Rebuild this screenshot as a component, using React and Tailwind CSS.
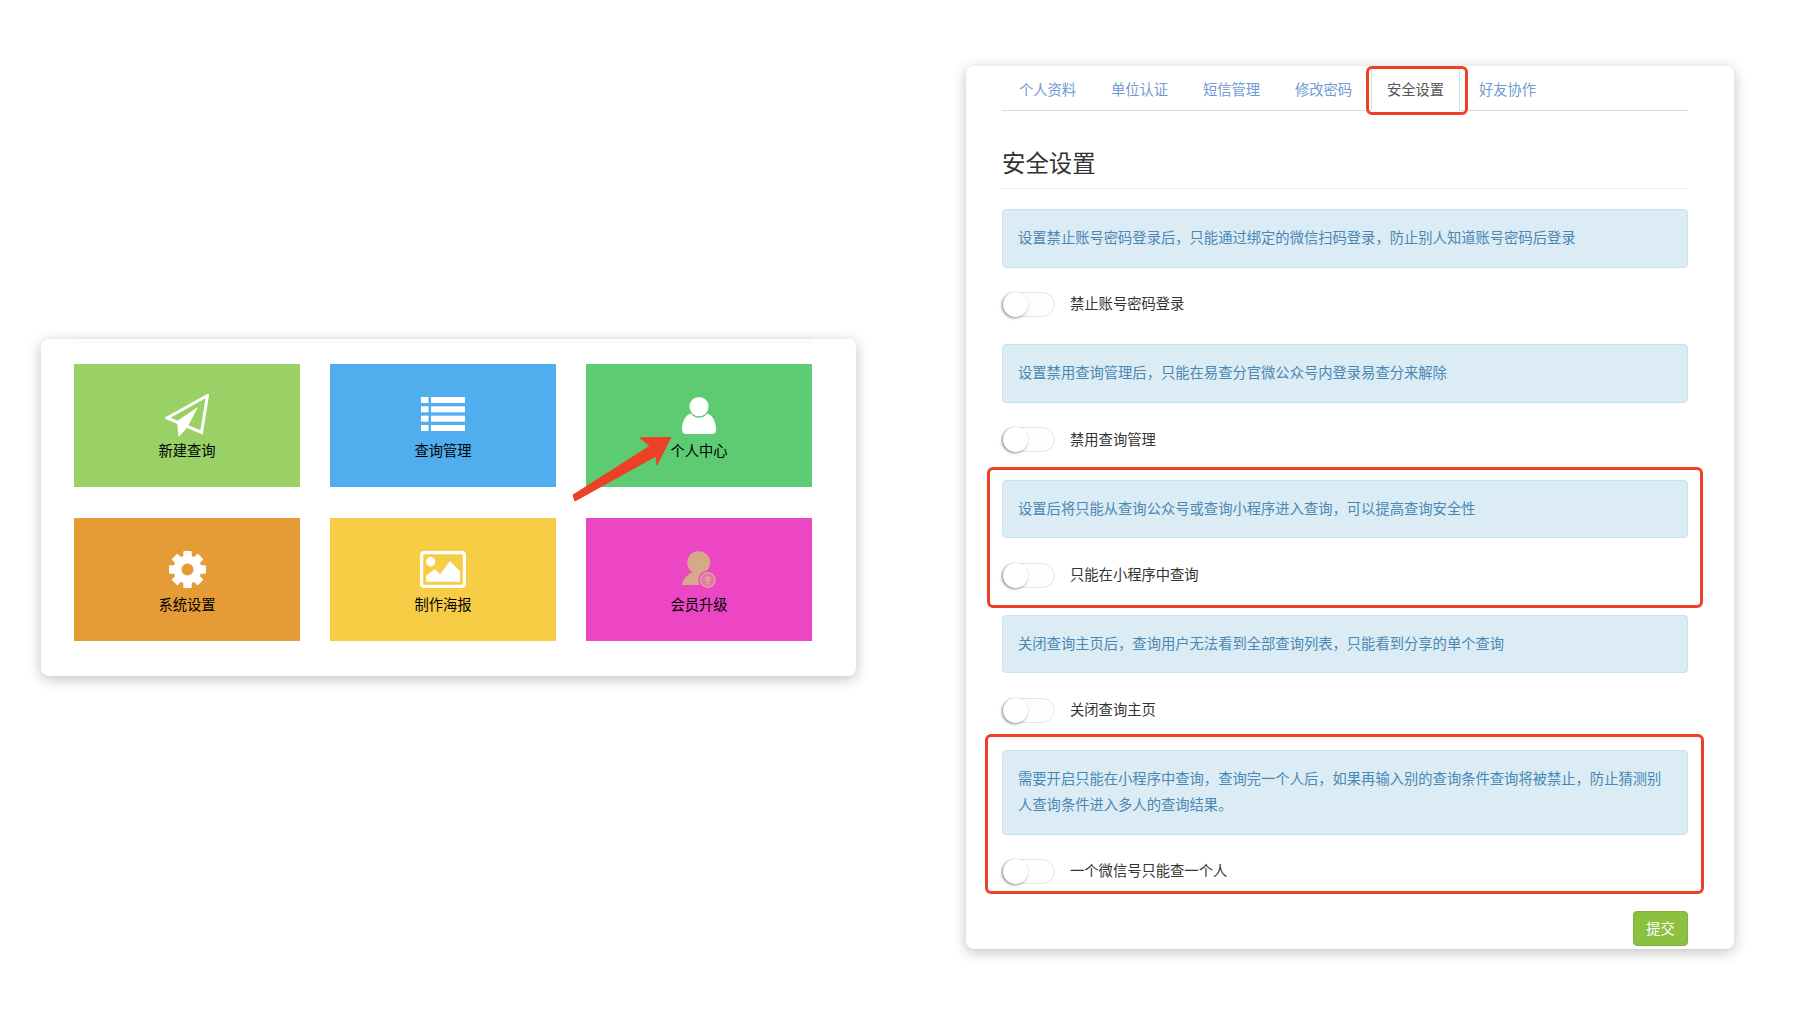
import React from "react";

/* ─── Icons ─── */
function PlaneIcon() {
  return (
    <svg width="44" height="44" viewBox="0 0 44 44" fill="none">
      <path d="M42.5 1.5 L2 24 L36.5 38.5 Z" stroke="#fff" strokeWidth="3" strokeLinejoin="miter" />
      <path d="M33 13 L12 27 L13.5 43 L22 34 Z" fill="#fff" />
    </svg>
  );
}

function ListIcon() {
  const rows = [0, 9.33, 18.66, 28];
  return (
    <svg className="-mt-[3px]" width="44" height="34" viewBox="0 0 44 34" fill="#fff">
      {rows.map(y => (
        <g key={y}>
          <rect x="0" y={y} width="7.5" height="6" />
          <rect x="10" y={y} width="34" height="6" />
        </g>
      ))}
    </svg>
  );
}

function UserIcon() {
  return (
    <svg width="34" height="37" viewBox="0 0 34 37" fill="#fff">
      <circle cx="17" cy="9.6" r="9.6" />
      <path d="M4 37 Q0 37 0 32.5 C0 24 4 17.5 9 16.5 C11 19.5 14 20.8 17 20.8 C20 20.8 23 19.5 25 16.5 C30 17.5 34 24 34 32.5 Q34 37 30 37 Z" />
    </svg>
  );
}

function GearIcon() {
  return (
    <svg width="37" height="37" viewBox="0 0 37 37" fill="#fff">
      {[0, 45, 90, 135, 180, 225, 270, 315].map(deg => (
        <rect key={deg} x="14.3" y="0" width="8.4" height="8" rx="1" transform={`rotate(${deg} 18.5 18.5)`} />
      ))}
      <circle cx="18.5" cy="18.5" r="10" fill="none" stroke="#fff" strokeWidth="8" />
    </svg>
  );
}

function PosterIcon() {
  return (
    <svg width="46" height="37" viewBox="0 0 46 37" fill="#fff">
      <rect x="1.6" y="1.6" width="42.8" height="33.8" rx="2.5" fill="none" stroke="#fff" strokeWidth="3.2" />
      <circle cx="10.7" cy="10.7" r="4.7" />
      <path d="M6 30.7 L6 24.7 L15 18.3 L20 23.3 L30 10 L40 20 L40 30.7 Z" />
    </svg>
  );
}

function UpgradeIcon() {
  return (
    <svg width="34" height="38" viewBox="0 0 34 38">
      <circle cx="16.7" cy="11.7" r="11.5" fill="#d6a98a" />
      <path d="M0 34 C1 28 5 24 9.5 21.5 L24 21.5 C28 24 30 28 31 34 Z" fill="#d6a98a" />
      <circle cx="25.7" cy="29" r="9.4" fill="#ec46c4" />
      <circle cx="25.7" cy="29" r="7.2" fill="#ea6fb8" stroke="#d6a98a" strokeWidth="1.6" />
      <path d="M25.7 24 L30 28.6 L28 28.6 L28 31 L23.4 31 L23.4 28.6 L21.4 28.6 Z M23.4 32 L28 32 L28 33.4 L23.4 33.4 Z" fill="#d6a98a" />
    </svg>
  );
}

function RedArrow() {
  return (
    <svg className="absolute left-[498px] top-[73px]" width="100" height="66" viewBox="0 0 100 66">
      <path d="M99 0 L68 1 L78 9 L1 58 L3 64 L84 19 L85 28 Z" fill="#ee4027" stroke="#ee4027" strokeWidth="1" strokeLinejoin="round" />
    </svg>
  );
}

/* ─── Data ─── */
const tiles = [
  { label: "新建查询", bg: "bg-[#9ad166]", icon: <PlaneIcon /> },
  { label: "查询管理", bg: "bg-[#50aeee]", icon: <ListIcon /> },
  { label: "个人中心", bg: "bg-[#5dcb72]", icon: <UserIcon /> },
  { label: "系统设置", bg: "bg-[#e59c36]", icon: <GearIcon /> },
  { label: "制作海报", bg: "bg-[#f8cd46]", icon: <PosterIcon /> },
  { label: "会员升级", bg: "bg-[#ec46c4]", icon: <UpgradeIcon /> },
];

const tabs = ["个人资料", "单位认证", "短信管理", "修改密码", "安全设置", "好友协作"];

const sections = [
  { text: "设置禁止账号密码登录后，只能通过绑定的微信扫码登录，防止别人知道账号密码后登录", label: "禁止账号密码登录" },
  { text: "设置禁用查询管理后，只能在易查分官微公众号内登录易查分来解除", label: "禁用查询管理" },
  {
    text: "设置后将只能从查询公众号或查询小程序进入查询，可以提高查询安全性",
    label: "只能在小程序中查询",
    mark: "-top-[13px] -bottom-[20px] -left-[15px] -right-[15px]",
  },
  { text: "关闭查询主页后，查询用户无法看到全部查询列表，只能看到分享的单个查询", label: "关闭查询主页" },
  {
    text: "需要开启只能在小程序中查询，查询完一个人后，如果再输入别的查询条件查询将被禁止，防止猜测别人查询条件进入多人的查询结果。",
    label: "一个微信号只能查一个人",
    mark: "-top-[16px] -bottom-[10px] -left-[17px] -right-[16px]",
  },
];

function Tile({ tile }) {
  return (
    <div className={`flex h-[123px] flex-col items-center pt-[30px] ${tile.bg}`}>
      <div className="flex h-[43px] items-center justify-center">{tile.icon}</div>
      <div className="mt-[3px] text-[14.3px] leading-[20px] text-black">{tile.label}</div>
    </div>
  );
}

function Section({ item }) {
  return (
    <div className="relative mb-[27.25px]">
      <div className="rounded-[4px] border border-[#c6e4ef] bg-[#dbecf5] pb-[16.5px] pl-[15px] pr-[16px] pt-[14px] text-[14.3px] leading-[26px] text-[#4a87b3]">
        {item.text}
      </div>
      <div className="mt-[24.5px] flex h-[25px] items-center">
        <div className="h-[25px] w-[53px] rounded-full border border-[#e4e4e4] bg-[#fdfdfd]">
          <div className="-mt-px h-[25px] w-[25px] rounded-full bg-white shadow-[-1px_1px_3px_rgba(0,0,0,0.45)]" />
        </div>
        <span className="mb-[3px] ml-[15px] text-[14.3px] text-[#333]">{item.label}</span>
      </div>
      {item.mark && <div className={`pointer-events-none absolute rounded-[6px] border-[3px] border-[#ee4027] ${item.mark}`} />}
    </div>
  );
}

export default function App() {
  return (
    <div className="flex h-[1016px] w-[1802px] items-start overflow-hidden bg-white font-['Noto_Sans_CJK_SC',sans-serif]">
      {/* left card */}
      <div className="ml-[41px] mt-[339px] h-[337px] w-[815px] rounded-[8px] bg-white pl-[33px] shadow-[0_3px_14px_rgba(0,0,0,0.25)]">
        <div className="h-[4px] w-[738px] border-x border-b border-[#eef5f5]" />
        <div className="relative mt-[21px] grid w-[738px] grid-cols-3 gap-x-[30px] gap-y-[31px]">
          {tiles.map(t => <Tile key={t.label} tile={t} />)}
          <RedArrow />
        </div>
      </div>

      {/* right card */}
      <div className="ml-[110px] mt-[66px] h-[883px] w-[768px] rounded-[8px] bg-white pl-[36px] pr-[46px] shadow-[0_3px_14px_rgba(0,0,0,0.25)]">
        <div className="flex h-[45px] border-b border-[#ddd] pl-px">
          {tabs.map(tab => {
            const active = tab === "安全设置";
            return (
              <div
                key={tab}
                className={`relative mr-[3px] flex h-[45px] w-[89px] items-center justify-center text-[14.3px] ${
                  active ? "border-x border-[#ddd] bg-white text-[#555]" : "text-[#6f9ad2]"
                }`}
              >
                {tab}
                {active && <div className="absolute -bottom-[4px] -left-[6px] -right-[9px] top-0 rounded-[6px] border-[3px] border-[#ee4027]" />}
              </div>
            );
          })}
        </div>

        <h2 className="mt-[35px] border-b border-[#eee] pb-[9px] text-[23.4px] font-normal leading-[33px] text-[#333]">安全设置</h2>

        <div className="mt-[20px]">
          {sections.map(s => <Section key={s.label} item={s} />)}
        </div>

        <div className="flex justify-end">
          <button className="h-[35px] w-[55px] rounded-[4px] border border-[#82b23c] bg-[#8cc03f] pb-[2px] text-[14.3px] text-white">提交</button>
        </div>
      </div>
    </div>
  );
}
